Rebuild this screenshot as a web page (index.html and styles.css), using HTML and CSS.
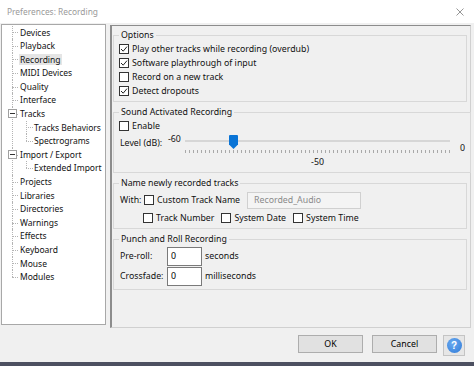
FILE: index.html
```html
<!DOCTYPE html>
<html lang="en">
<head>
    <meta charset="UTF-8">
    <meta name="viewport" content="width=device-width, initial-scale=1.0">
    <title>Preferences: Recording</title>
    <link rel="stylesheet" href="styles.css">
</head>
<body>
    <header class="titlebar">
        <span class="title">Preferences: Recording</span>
        <svg class="close" viewBox="0 0 8 8"><path d="M0.5 0.5 L7.5 7.5 M7.5 0.5 L0.5 7.5" /></svg>
    </header>

    <div class="main">
        <!-- category tree -->
        <nav class="tree">
            <ul>
                <li><span class="label">Devices</span></li>
                <li><span class="label">Playback</span></li>
                <li><span class="label selected">Recording</span></li>
                <li><span class="label">MIDI Devices</span></li>
                <li><span class="label">Quality</span></li>
                <li><span class="label">Interface</span></li>
                <li><span class="toggle"></span><span class="label">Tracks</span>
                    <ul>
                        <li><span class="label">Tracks Behaviors</span></li>
                        <li><span class="label">Spectrograms</span></li>
                    </ul>
                </li>
                <li><span class="toggle"></span><span class="label">Import / Export</span>
                    <ul>
                        <li><span class="label">Extended Import</span></li>
                    </ul>
                </li>
                <li><span class="label">Projects</span></li>
                <li><span class="label">Libraries</span></li>
                <li><span class="label">Directories</span></li>
                <li><span class="label">Warnings</span></li>
                <li><span class="label">Effects</span></li>
                <li><span class="label">Keyboard</span></li>
                <li><span class="label">Mouse</span></li>
                <li><span class="label">Modules</span></li>
            </ul>
        </nav>

        <section class="panel">
            <fieldset class="group">
                <legend>Options</legend>
                <label class="check"><span class="box"><svg viewBox="0 0 8 8"><path d="M1 4 L3.2 6.2 L7 1.6" /></svg></span>Play other tracks while recording (overdub)</label>
                <label class="check"><span class="box"><svg viewBox="0 0 8 8"><path d="M1 4 L3.2 6.2 L7 1.6" /></svg></span>Software playthrough of input</label>
                <label class="check"><span class="box"></span>Record on a new track</label>
                <label class="check"><span class="box"><svg viewBox="0 0 8 8"><path d="M1 4 L3.2 6.2 L7 1.6" /></svg></span>Detect dropouts</label>
            </fieldset>

            <fieldset class="group">
                <legend>Sound Activated Recording</legend>
                <label class="check"><span class="box"></span>Enable</label>
                <div class="level">
                    <span class="level-label">Level (dB):</span>
                    <span class="level-min">-60</span>
                    <div class="slider">
                        <div class="track">
                            <svg class="thumb" style="left: 16.5%" viewBox="0 0 9 14"><path d="M1 0 H8 Q9 0 9 1 V9.5 L4.5 14 L0 9.5 V1 Q0 0 1 0 Z" /></svg>
                        </div>
                        <div class="ticks"></div>
                        <div class="slider-value">-50</div>
                    </div>
                    <span class="level-max">0</span>
                </div>
            </fieldset>

            <fieldset class="group">
                <legend>Name newly recorded tracks</legend>
                <div class="name-row">
                    <span class="with">With:</span>
                    <label class="check custom"><span class="box"></span>Custom Track Name</label>
                    <input class="name-input" type="text" value="Recorded_Audio" disabled>
                </div>
                <div class="name-row options-row">
                    <label class="check"><span class="box"></span>Track Number</label>
                    <label class="check"><span class="box"></span>System Date</label>
                    <label class="check"><span class="box"></span>System Time</label>
                </div>
            </fieldset>

            <fieldset class="group">
                <legend>Punch and Roll Recording</legend>
                <div class="punch">
                    <span>Pre-roll:</span>
                    <input class="field" type="text" value="0">
                    <span>seconds</span>
                    <span>Crossfade:</span>
                    <input class="field" type="text" value="0">
                    <span>milliseconds</span>
                </div>
            </fieldset>
        </section>
    </div>

    <footer class="footer">
        <button class="btn">OK</button>
        <button class="btn">Cancel</button>
        <button class="help"><span class="help-icon">?</span></button>
    </footer>
    <div class="taskbar"></div>
</body>
</html>
```

FILE: styles.css
```css
*,*::before,*::after{
    box-sizing: border-box;
    margin: 0;
    padding: 0;
}
body{
    width: 474px;
    height: 366px;
    overflow: hidden;
    background-color: #f0f0f0;
    font-family: 'Noto Sans', sans-serif;
    font-size: 8.8px;
    color: #111;
}
.titlebar{
    height: 23px;
    background-color: #fff;
    display: flex;
    align-items: center;
    justify-content: space-between;
    padding: 0 7px;
}
.title{
    color: #9a9a9a;
    font-size: 8.4px;
}
.close{
    width: 8px;
    height: 8px;
    margin-right: 3px;
    stroke: #8a8a8a;
    stroke-width: 0.9;
}
.main{
    height: 305px;
    display: flex;
    align-items: flex-start;
}

/* tree */
.tree{
    margin: 1px 0 0 1px;
    width: 105px;
    height: 301px;
    background-color: #fff;
    border: 1px solid #a8a8a8;
    padding-top: 0.5px;
    overflow: hidden;
    font-size: 8.5px;
}
.tree ul{
    list-style: none;
}
.tree li{
    position: relative;
    padding-left: 18px;
    line-height: 13.6px;
    white-space: nowrap;
}
.tree li::before{
    content: '';
    position: absolute;
    left: 10px;
    top: 6.8px;
    width: 6px;
    border-top: 1px dotted #b4b4b4;
}
.tree li::after{
    content: '';
    position: absolute;
    left: 10px;
    top: 0;
    bottom: 0;
    border-left: 1px dotted #b4b4b4;
}
.tree li:last-child::after{
    bottom: auto;
    height: 7px;
}
.tree ul ul li{
    padding-left: 14px;
}
.tree ul ul li::before{
    left: 6px;
    width: 7px;
}
.tree ul ul li::after{
    left: 6px;
}
.toggle{
    position: absolute;
    left: 6px;
    top: 2.3px;
    width: 9px;
    height: 9px;
    border: 1px solid #a0a0a0;
    background-color: #fff;
    z-index: 1;
}
.toggle::after{
    content: '';
    position: absolute;
    left: 1px;
    top: 3px;
    width: 5px;
    height: 1px;
    background-color: #333;
}
.label{
    padding: 0 1px;
    margin-left: -1px;
}
.selected{
    background-color: #e5e5e5;
}

/* right panel */
.panel{
    margin: 2px 0 0 4px;
    width: 361px;
    height: 303px;
    border-top: 1px solid #8c8c8c;
    border-left: 2px solid #8c8c8c;
    border-right: 1px solid #d0d0d0;
    border-bottom: 1px solid #d0d0d0;
    padding: 3px 3px 0 1px;
}
.group{
    border: 1px solid #d8d8d8;
    padding: 0 5px 3px;
    margin-bottom: 4px;
}
.group legend{
    padding: 0 2px;
    line-height: 13px;
}
.check{
    display: flex;
    align-items: center;
    gap: 3px;
    height: 14px;
    white-space: nowrap;
}
.box{
    flex: none;
    width: 10px;
    height: 10px;
    border: 1px solid #333;
    background-color: #fff;
    display: flex;
    align-items: center;
    justify-content: center;
}
.box svg{
    width: 8px;
    height: 8px;
    fill: none;
    stroke: #222;
    stroke-width: 1;
}

/* level slider */
.level{
    display: flex;
    align-items: flex-start;
    margin-top: 1px;
}
.level-label{
    width: 48px;
    margin: 3px 0 0 1px;
}
.level-min{
    width: 17px;
    margin-top: -1px;
}
.slider{
    width: 265px;
    display: flex;
    flex-direction: column;
}
.track{
    position: relative;
    height: 14px;
    display: flex;
    align-items: center;
}
.track::before{
    content: '';
    width: 100%;
    height: 2px;
    background-color: #d6d6d6;
}
.thumb{
    position: absolute;
    top: 1px;
    width: 9px;
    height: 14px;
    fill: #0a74d6;
}
.ticks{
    height: 3px;
    margin-top: 2px;
    background: repeating-linear-gradient(to right, #a9a9a9 0 1px, transparent 1px 4px);
}
.slider-value{
    margin-top: 3px;
    line-height: 13px;
    text-align: center;
}
.level-max{
    margin: 8px 0 0 10px;
}

/* name tracks */
.name-row{
    display: flex;
    align-items: center;
}
.name-row:first-of-type{
    height: 18px;
    margin-top: 1px;
}
.with{
    width: 24px;
    margin-left: 1px;
}
.custom{
    width: 103px;
}
.name-input{
    font: inherit;
    width: 114px;
    height: 17px;
    border: 1px solid #d0d0d0;
    background-color: #f4f4f4;
    color: #8a8a8a;
    padding: 0 6px;
}
.options-row{
    height: 14px;
    margin-top: 2px;
    padding-left: 24px;
    gap: 7px;
}

/* punch and roll */
.punch{
    display: grid;
    grid-template-columns: 44px 35px auto;
    grid-auto-rows: 20px;
    column-gap: 3px;
    align-items: center;
    padding-left: 1px;
}
.field{
    font: inherit;
    height: 19px;
    width: 35px;
    border: 1px solid #7a7a7a;
    background-color: #fff;
    padding: 0 3px;
}

/* footer */
.footer{
    height: 34px;
    display: flex;
    justify-content: flex-end;
    align-items: flex-start;
    gap: 9px;
    padding: 7px 9px 0 0;
}
.btn{
    font: inherit;
    width: 65px;
    height: 18px;
    background-color: #e1e1e1;
    border: 1px solid #adadad;
}
.help{
    width: 22px;
    height: 21px;
    margin-left: -3px;
    background-color: #e6e6e6;
    border: 1px solid #c4c4c4;
    display: flex;
    align-items: center;
    justify-content: center;
}
.help-icon{
    width: 15px;
    height: 15px;
    border-radius: 50%;
    background: radial-gradient(circle at 40% 35%, #6aaaf0, #2f7ad8);
    color: #fff;
    font-weight: 700;
    font-size: 10px;
    line-height: 15px;
    text-align: center;
}
.taskbar{
    height: 4px;
    background-color: #4d5061;
}
```
